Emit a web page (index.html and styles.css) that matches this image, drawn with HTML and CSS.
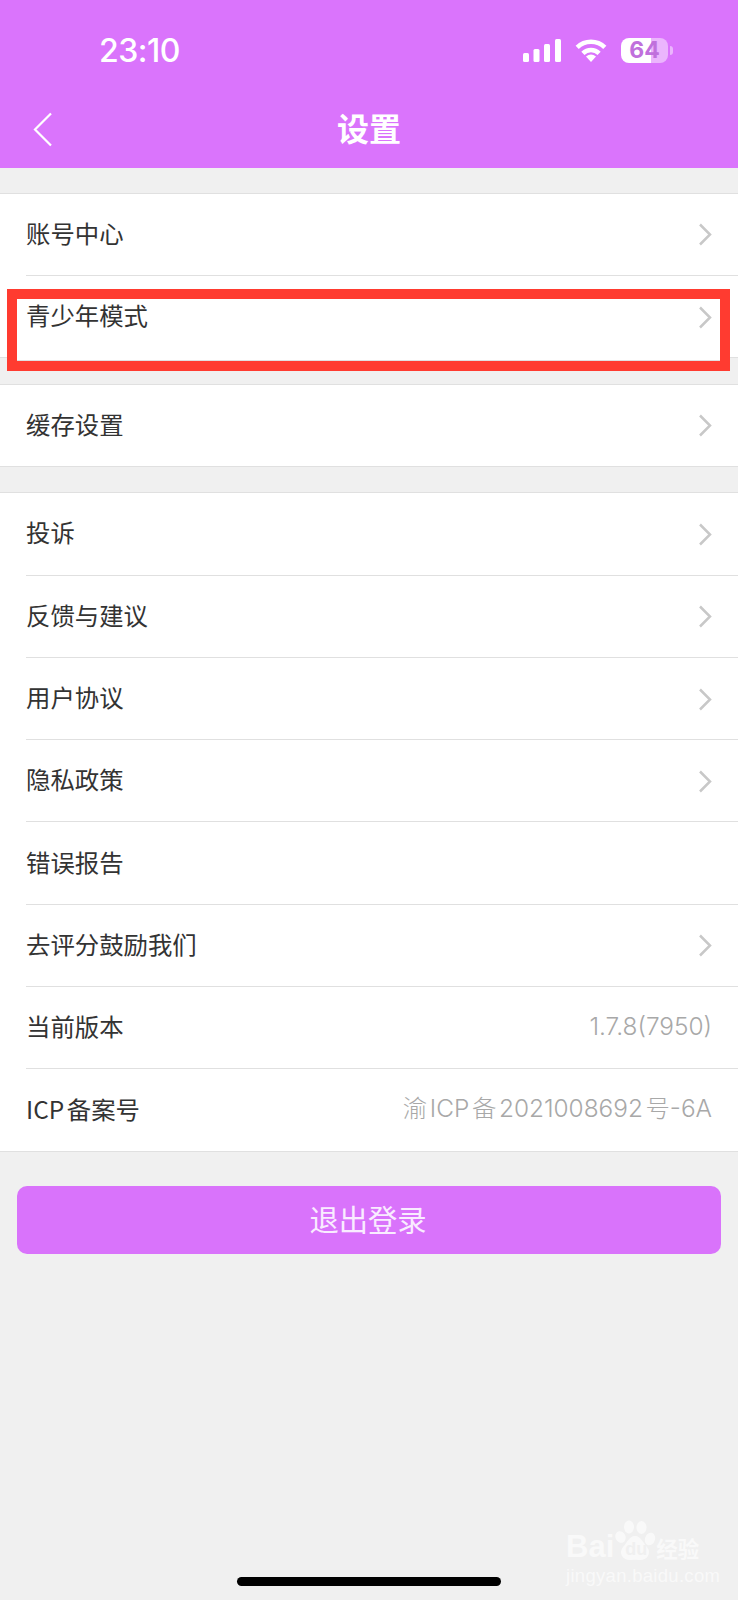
FILE: index.html
```html
<!DOCTYPE html>
<html lang="zh-CN">
<head>
<meta charset="utf-8">
<title>设置</title>
<link rel="stylesheet" href="styles.css">
</head>
<body>
<header class="header">
  <div class="status">
    <span class="time">23:10</span>
    <div class="status-icons">
      <svg class="signal" width="38" height="23" viewBox="0 0 38 23"><rect x="0" y="14" width="6" height="9" rx="1.5"/><rect x="10.5" y="10" width="6" height="13" rx="1.5"/><rect x="21" y="5" width="6" height="18" rx="1.5"/><rect x="32" y="0" width="6" height="23" rx="1.5"/></svg>
      <svg class="wifi" width="32" height="24" viewBox="0 0 32 24"><path class="wifi-arc" d="M2.2 9.4A19.5 19.5 0 0 1 29.8 9.4"/><path class="wifi-arc" d="M7.9 15.4A11.5 11.5 0 0 1 24.1 15.4"/><path class="wifi-dot" d="M16 24L11 18.6Q16 14.6 21 18.6Z"/></svg>
      <div class="battery"><span class="battery-num">64</span></div>
    </div>
  </div>
  <nav class="nav">
    <div class="nav-side"><svg class="back" width="20" height="35" viewBox="0 0 20 35"><path d="M18 1.5L2 17.5L18 33.5"/></svg></div>
    <h1 class="title">设置</h1>
    <div class="nav-side"></div>
  </nav>
</header>

<main class="content">
  <section class="group">
    <div class="row"><span class="label">账号中心</span><svg class="chev" width="14" height="23" viewBox="0 0 14 23"><path d="M2 1.5L12 11.5L2 21.5"/></svg></div>
    <div class="row row-last"><span class="label">青少年模式</span><svg class="chev" width="14" height="23" viewBox="0 0 14 23"><path d="M2 1.5L12 11.5L2 21.5"/></svg></div>
    <div class="highlight"></div>
  </section>

  <section class="group">
    <div class="row row-last"><span class="label">缓存设置</span><svg class="chev" width="14" height="23" viewBox="0 0 14 23"><path d="M2 1.5L12 11.5L2 21.5"/></svg></div>
  </section>

  <section class="group">
    <div class="row"><span class="label">投诉</span><svg class="chev" width="14" height="23" viewBox="0 0 14 23"><path d="M2 1.5L12 11.5L2 21.5"/></svg></div>
    <div class="row"><span class="label">反馈与建议</span><svg class="chev" width="14" height="23" viewBox="0 0 14 23"><path d="M2 1.5L12 11.5L2 21.5"/></svg></div>
    <div class="row"><span class="label">用户协议</span><svg class="chev" width="14" height="23" viewBox="0 0 14 23"><path d="M2 1.5L12 11.5L2 21.5"/></svg></div>
    <div class="row"><span class="label">隐私政策</span><svg class="chev" width="14" height="23" viewBox="0 0 14 23"><path d="M2 1.5L12 11.5L2 21.5"/></svg></div>
    <div class="row"><span class="label">错误报告</span></div>
    <div class="row"><span class="label">去评分鼓励我们</span><svg class="chev" width="14" height="23" viewBox="0 0 14 23"><path d="M2 1.5L12 11.5L2 21.5"/></svg></div>
    <div class="row"><span class="label">当前版本</span><span class="value">1.7.8(7950)</span></div>
    <div class="row row-last"><span class="label">ICP<span class="cjk-gap">备案号</span></span><span class="value">渝<span class="cjk-gap">ICP</span><span class="cjk-gap">备</span><span class="cjk-gap">2021008692</span><span class="cjk-gap">号-6A</span></span></div>
  </section>

  <button class="logout" type="button">退出登录</button>
</main>

<div class="home-bar"></div>

<div class="watermark">
  <div class="wm-top">
    <span class="wm-bai">Bai</span>
    <div class="wm-paw">
      <svg width="42" height="42" viewBox="0 0 42 42"><ellipse cx="6.500" cy="17" rx="5" ry="6" transform="rotate(-25 6.500 17)"/><ellipse cx="15" cy="7" rx="5" ry="6.500"/><ellipse cx="27.500" cy="7.500" rx="5" ry="6.500"/><ellipse cx="36" cy="19" rx="5" ry="6.500" transform="rotate(20 36 19)"/><path d="M21 16C27 16 29 23 33 27C38 33 33 41 25 40C22 39.500 20 39.500 17 40C9 41 4 33 9 27C13 23 15 16 21 16Z"/></svg>
      <span class="wm-du">du</span>
    </div>
    <span class="wm-cn">经验</span>
  </div>
  <div class="wm-url">jingyan.baidu.com</div>
</div>
</body>
</html>
```

FILE: styles.css
```css
* { box-sizing: border-box; }

html, body { margin: 0; padding: 0; }

body {
  position: relative;
  display: flex;
  flex-direction: column;
  width: 738px;
  height: 1600px;
  overflow: hidden;
  background: #f0f0f0;
  font-family: "Noto Sans CJK SC", "Noto Sans", sans-serif;
  color: #333;
}

/* Header */
.header {
  flex: none;
  height: 167.500px;
  padding-top: 4px;
  background: #da74fc;
  color: #fff;
}

.status {
  display: flex;
  align-items: center;
  justify-content: space-between;
  height: 92px;
  padding: 0 64px 0 99px;
}

.time {
  font-family: Inter, "Liberation Sans", sans-serif;
  font-size: 32px;
  font-weight: 500;
  letter-spacing: -0.500px;
}

.status-icons {
  display: flex;
  align-items: center;
}

.signal { fill: #fff; margin-right: 14px; }

.wifi { margin-right: 14px; }
.wifi-arc { fill: none; stroke: #fff; stroke-width: 4.500; }
.wifi-dot { fill: #fff; }

.battery {
  position: relative;
  display: flex;
  align-items: center;
  justify-content: center;
  width: 47px;
  height: 25px;
  margin-right: 6px;
  border-radius: 8px;
  background: linear-gradient(90deg, #fff 64%, #ebb5fd 64%);
}

.battery::after {
  content: "";
  position: absolute;
  top: 8px;
  right: -5px;
  width: 3px;
  height: 9px;
  border-radius: 0 3px 3px 0;
  background: #ebb5fd;
}

.battery-num {
  font-family: Inter, "Liberation Sans", sans-serif;
  font-size: 23px;
  font-weight: 700;
  line-height: 1;
  color: #c070dc;
}

.nav {
  display: grid;
  grid-template-columns: 1fr auto 1fr;
  align-items: center;
  height: 67px;
}

.nav-side { display: flex; padding-left: 33px; }

.back { fill: none; stroke: #fff; stroke-width: 2.200; }

.title {
  margin: 0;
  padding-bottom: 6px;
  font-size: 32px;
  font-weight: 700;
  line-height: 1;
}

/* List groups */
.content { flex: none; }

.group {
  position: relative;
  margin-top: 25.300px;
  background: #fff;
  border-top: 1px solid #e0e0e0;
}

.row {
  position: relative;
  display: flex;
  align-items: center;
  justify-content: space-between;
  height: 82.300px;
  padding: 0 26px;
}

.row::after {
  content: "";
  position: absolute;
  left: 26px;
  right: 0;
  bottom: 0;
  height: 1px;
  background: #e0e0e0;
}

.row-last::after { left: 0; }

.label {
  padding-bottom: 3.500px;
  font-size: 24.400px;
  line-height: 1;
  color: #333;
}

.value {
  padding-bottom: 4px;
  font-family: Inter, "Noto Sans CJK SC", sans-serif;
  font-size: 24.400px;
  font-weight: 300;
  line-height: 1;
  color: #a8a8a8;
}

.cjk-gap { margin-left: 2.600px; }

.chev { fill: none; stroke: #c8c8c8; stroke-width: 2.500; }

.highlight {
  position: absolute;
  top: 95.200px;
  left: 7px;
  width: 723px;
  height: 81.700px;
  border: 10px solid #ff3b30;
  pointer-events: none;
}

.highlight::after {
  content: "";
  position: absolute;
  left: 0;
  right: 0;
  bottom: 0;
  height: 4px;
  background: #fff;
  border-bottom: 1px solid #e0e0e0;
}

/* Logout */
.logout {
  display: block;
  width: 704px;
  height: 68px;
  margin: 34px 0 0 17px;
  padding: 0 2px 3px 0;
  border: 0;
  border-radius: 10px;
  background: #d973fb;
  font-family: inherit;
  font-size: 29.300px;
  line-height: 1;
  color: #f9ecff;
}

/* Home indicator */
.home-bar {
  width: 264px;
  height: 9px;
  margin: auto auto 14px;
  border-radius: 5px;
  background: #000;
}

/* Watermark */
.watermark {
  position: absolute;
  top: 1520px;
  left: 566px;
  width: 134px;
  color: #f9f9f9;
}

.wm-top {
  display: flex;
  align-items: flex-end;
  height: 42px;
  white-space: nowrap;
}

.wm-bai {
  font-family: "Liberation Sans", sans-serif;
  font-size: 31px;
  font-weight: 700;
  line-height: 30px;
}

.wm-paw {
  position: relative;
  flex: none;
  width: 42px;
  height: 42px;
  fill: #f9f9f9;
}

.wm-du {
  position: absolute;
  left: 11px;
  top: 20px;
  font-family: "Liberation Sans", sans-serif;
  font-size: 18px;
  font-weight: 700;
  line-height: 18px;
  color: #f0f0f0;
}

.wm-cn {
  flex: none;
  font-size: 21.500px;
  font-weight: 700;
  line-height: 28px;
}

.wm-url {
  margin-top: 6px;
  font-family: "Liberation Sans", sans-serif;
  font-size: 18.500px;
  letter-spacing: 0.300px;
  line-height: 16px;
  white-space: nowrap;
}
```
